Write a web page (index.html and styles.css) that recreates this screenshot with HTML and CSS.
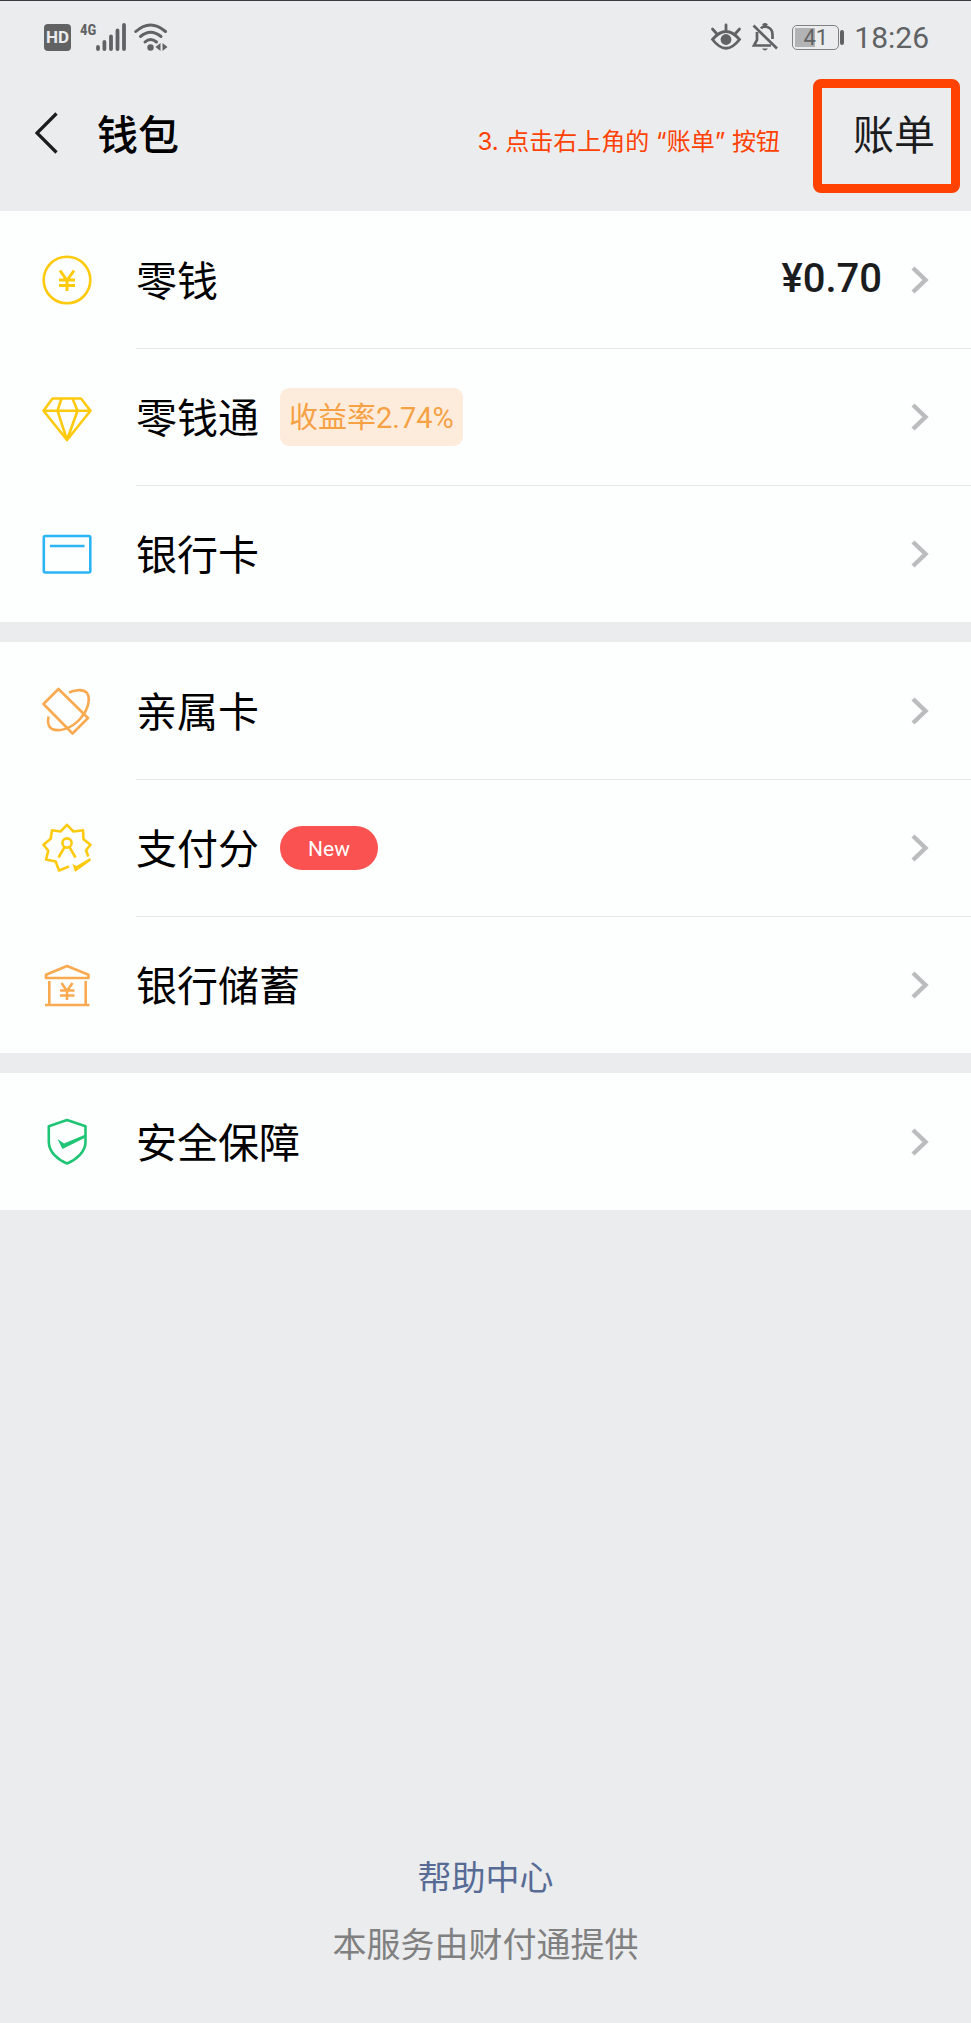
FILE: index.html
```html
<!DOCTYPE html>
<html lang="zh-CN">
<head>
<meta charset="utf-8">
<meta name="viewport" content="width=device-width, initial-scale=1">
<title>钱包</title>
<link rel="stylesheet" href="styles.css">
</head>
<body>
<svg class="defs" aria-hidden="true">
  <symbol id="chevron" viewBox="0 0 18 30"><path d="M2 3 L14.5 15 L2 27" fill="none" stroke="currentColor" stroke-width="4.4"/></symbol>
</svg>

<div class="status">
  <div class="status-group">
    <span class="hd">HD</span>
    <span class="net">4G</span>
    <svg class="signal" width="30" height="30" viewBox="0 0 30 30" aria-hidden="true">
      <path d="M2 25v2M8.4 20v7M15 14.500v12.500M21.500 8.500v18.500M28 3v24" stroke="currentColor" stroke-width="3.800" stroke-linecap="round"/>
    </svg>
    <svg class="wifi" width="34" height="30" viewBox="0 0 34 30" aria-hidden="true">
      <g fill="none" stroke="currentColor" stroke-width="3" stroke-linecap="round">
        <path d="M1.800 9.500Q16.500-3.500 31.500 9.500"/><path d="M6.500 14.500Q16.500 6 27 14.500"/><path d="M11 20Q16.500 15 22.500 20"/>
      </g>
      <circle cx="16.500" cy="25.500" r="3.200" fill="currentColor"/>
      <path d="M21.500 25L26.500 21V29ZM28.500 21L33.500 25L28.500 29Z" fill="currentColor"/>
    </svg>
  </div>
  <div class="status-group">
    <svg class="eye" width="32" height="30" viewBox="0 0 32 30" aria-hidden="true">
      <g fill="none" stroke="currentColor" stroke-width="2.800" stroke-linecap="round">
        <path d="M2.500 17.500Q16 1.500 29.500 17.500Q16 35 2.500 17.500Z"/><path d="M16 3v5M2.500 7l4 4.500M29.500 7l-4 4.500"/>
      </g>
      <circle cx="16" cy="17.500" r="5.400" fill="currentColor"/>
    </svg>
    <svg class="bell" width="26" height="30" viewBox="0 0 26 30" aria-hidden="true">
      <g fill="none" stroke="currentColor" stroke-width="2.700">
        <path d="M1.500 3.500L25 26.500"/><path d="M9 6.500Q10 5 13 4.500Q20.500 5.500 20.500 12.500V17"/><path d="M5 10V18L2 23.500H19"/><path d="M11 3.500Q13 1.500 15 3.500"/>
      </g>
      <path d="M10 26.500h6q-3 4-6 0Z" fill="currentColor"/>
    </svg>
    <span class="battery"><span class="battery-level">41</span></span>
    <time class="time">18:26</time>
  </div>
</div>

<header class="header">
  <button class="back" type="button" aria-label="返回">
    <svg width="24" height="42" viewBox="0 0 24 42" aria-hidden="true"><path d="M21.500 1.500L2 21L21.500 40.500" fill="none" stroke="currentColor" stroke-width="3.200"/></svg>
  </button>
  <h1 class="title">钱包</h1>
  <p class="note">3. 点击右上角的 “账单” 按钮</p>
  <button class="bill" type="button">账单</button>
</header>

<main>
  <nav class="group">
    <a class="row" href="#">
      <svg class="icon yellow" viewBox="0 0 50 50" aria-hidden="true"><circle cx="25" cy="25" r="23.300"/><path class="thick" d="M18 15.500L25 25.500L32 15.500M25 25.500V36M17 25H33M17 30.500H33"/></svg>
      <span class="cell"><span class="label">零钱</span><span class="amount">¥0.70</span><svg class="chevron" aria-hidden="true"><use href="#chevron"/></svg></span>
    </a>
    <a class="row" href="#">
      <svg class="icon yellow" viewBox="0 0 50 50" aria-hidden="true"><path d="M10.500 6.500H39L48.500 18.700L25 48L1.500 18.700ZM1.500 18.700H48.500M19.500 6.500L15.500 18.700L25 48L35.500 18.700L30.500 6.500"/></svg>
      <span class="cell"><span class="label">零钱通</span><span class="rate">收益率2.74%</span><svg class="chevron" aria-hidden="true"><use href="#chevron"/></svg></span>
    </a>
    <a class="row" href="#">
      <svg class="icon blue" viewBox="0 0 50 50" aria-hidden="true"><rect x="1.800" y="7" width="46.500" height="36.500" rx="1.500"/><path d="M8 17H42.500"/></svg>
      <span class="cell"><span class="label">银行卡</span><svg class="chevron" aria-hidden="true"><use href="#chevron"/></svg></span>
    </a>
  </nav>

  <nav class="group">
    <a class="row" href="#">
      <svg class="icon orange" viewBox="0 0 50 50" aria-hidden="true"><path d="M16.500 3L1.500 18L30.500 47.500L46 32Z"/><path d="M27 6.500C35 3 42 3.500 45 7C49 13 46 24 38 33C29 43 17 46 10 43C6 41 5.500 36 6.500 30.500"/></svg>
      <span class="cell"><span class="label">亲属卡</span><svg class="chevron" aria-hidden="true"><use href="#chevron"/></svg></span>
    </a>
    <a class="row" href="#">
      <svg class="icon yellow" viewBox="0 0 50 50" aria-hidden="true"><path d="M46.300 33.500L44 27.200L48.500 21.700L41.500 16.300L41 7.200L31.500 8.500L25 1.800L18.500 8.500L10 7.200L8.700 15.700L1.500 21.700L6.300 27.700L4 36.500L13.700 38.500L17 47.500L27 43.500"/><circle cx="25" cy="20" r="4.600"/><path d="M16.500 34.500L22.300 24.500M33.500 34.500L27.700 24.500"/><path class="fill" d="M30.500 41L34.500 43L48 35L49 37.500L33 49Z"/></svg>
      <span class="cell"><span class="label">支付分</span><span class="new">New</span><svg class="chevron" aria-hidden="true"><use href="#chevron"/></svg></span>
    </a>
    <a class="row" href="#">
      <svg class="icon orange" viewBox="0 0 50 50" aria-hidden="true"><path d="M4 18V14.800L25 6L46.500 14.800V18ZM7.300 21V44M43.700 21V44M3 45H47.500M19.500 23L25 31L30.500 23M25 31V40M18 30.500H32.500M18 35.500H32.500"/></svg>
      <span class="cell"><span class="label">银行储蓄</span><svg class="chevron" aria-hidden="true"><use href="#chevron"/></svg></span>
    </a>
  </nav>

  <nav class="group">
    <a class="row" href="#">
      <svg class="icon green" viewBox="0 0 50 50" aria-hidden="true"><path d="M25 3L43.500 9.300V25C43.500 35 34 43 25 46.500C16 43 6.800 35 6.800 25V9.300Z"/><path class="fill" d="M15.500 22L22 26.500L43.500 17.500V20.500L20.500 32Z"/></svg>
      <span class="cell"><span class="label">安全保障</span><svg class="chevron" aria-hidden="true"><use href="#chevron"/></svg></span>
    </a>
  </nav>
</main>

<footer class="footer">
  <a class="help" href="#">帮助中心</a>
  <p class="provider">本服务由财付通提供</p>
</footer>
</body>
</html>
```

FILE: styles.css
```css
* {
  box-sizing: border-box;
}

body {
  margin: 0;
  min-height: 100vh;
  display: flex;
  flex-direction: column;
  background: #ebecee;
  border-top: 1px solid #3c3a40;
  color: #000;
  font-family: Roboto, "Noto Sans CJK SC", sans-serif;
}

h1,
p {
  margin: 0;
  font-weight: 400;
}

button {
  padding: 0;
  border: 0;
  background: none;
  color: inherit;
  font: inherit;
}

a {
  color: inherit;
  text-decoration: none;
}

.defs {
  display: none;
}

.status {
  display: flex;
  justify-content: space-between;
  height: 74px;
  padding: 0 42px 2px 44px;
  color: #606264;
}

.status-group {
  display: flex;
  align-items: center;
}

.hd {
  width: 27px;
  border-radius: 4px;
  background: #606264;
  color: #ebecee;
  font: 700 17px/27px Roboto, sans-serif;
  text-align: center;
}

.net {
  align-self: flex-start;
  margin: 20px 0 0 9px;
  font: 700 15px/18px "Roboto Condensed", Roboto, sans-serif;
}

.wifi {
  margin-left: 8px;
}

.bell {
  margin-left: 10px;
}

.battery {
  display: flex;
  align-items: center;
  margin-left: 14px;
}

.battery-level {
  width: 47px;
  height: 25px;
  border: 1px solid #808284;
  border-radius: 5px;
  background: linear-gradient(#b2b3b5, #b2b3b5) 2px 2px / 20px 19px no-repeat;
  font-size: 22px;
  line-height: 23px;
  text-align: center;
}

.battery::after {
  content: "";
  width: 4px;
  height: 15px;
  margin-left: 1px;
  border-radius: 2px;
  background: #606264;
}

.time {
  margin-left: 10px;
  font-size: 30px;
}

.header {
  display: flex;
  align-items: baseline;
  height: 136px;
  padding: 4px 11px 0 35px;
}

.back {
  align-self: flex-start;
  width: 24px;
  height: 42px;
  margin-top: 33px;
  color: #1b1c1e;
}

.back svg {
  display: block;
}

.title {
  margin-left: 38px;
  font-size: 41px;
  font-weight: 500;
}

.note {
  margin-left: auto;
  color: #ff4201;
  font-family: Inter, "Noto Sans CJK SC", sans-serif;
  font-size: 24px;
}

.bill {
  height: 114px;
  margin-left: 33px;
  padding: 0 16px 8px 31px;
  border: 9px solid #ff4201;
  border-radius: 8px;
  color: #1b1c1e;
  font-size: 41px;
}

.group {
  background: #fdfefe;
}

.group + .group {
  margin-top: 20px;
}

.row {
  display: flex;
  align-items: center;
  height: 137px;
  padding-left: 42px;
}

.icon {
  flex: none;
  width: 50px;
  height: 50px;
  margin-right: 44px;
  fill: none;
  stroke: currentColor;
  stroke-width: 2.6;
  stroke-linejoin: round;
}

.icon .thick {
  stroke-width: 3;
}

.icon .fill {
  fill: currentColor;
  stroke: none;
}

.yellow {
  color: #fdca10;
}

.blue {
  color: #2bb5f5;
}

.orange {
  color: #f9aa50;
}

.green {
  color: #1fc574;
}

.cell {
  flex: 1;
  display: flex;
  align-items: center;
  height: 100%;
  padding-right: 42px;
}

.row + .row .cell {
  border-top: 1px solid #e6e8e8;
}

.label {
  padding-bottom: 4px;
  font-size: 41px;
}

.amount {
  margin-left: auto;
  padding-bottom: 2px;
  color: #1b1c1e;
  font-size: 40px;
  font-weight: 500;
}

.chevron {
  width: 18px;
  height: 30px;
  margin-left: auto;
  color: #bbbcbe;
}

.amount + .chevron {
  margin-left: 29px;
}

.rate {
  margin-left: 21px;
  padding: 2px 9px 0;
  border-radius: 9px;
  background: #fdecdc;
  color: #f6a144;
  font-size: 29px;
  line-height: 56px;
}

.new {
  width: 98px;
  margin-left: 21px;
  padding-top: 2px;
  border-radius: 22px;
  background: #fa5151;
  color: #fff;
  font-size: 21px;
  line-height: 42px;
  text-align: center;
}

.footer {
  display: flex;
  flex-direction: column;
  align-items: center;
  gap: 18px;
  margin-top: auto;
  padding-bottom: 53px;
  font-size: 34px;
  line-height: 49px;
}

.help {
  color: #576b95;
}

.provider {
  color: #808080;
}
```
